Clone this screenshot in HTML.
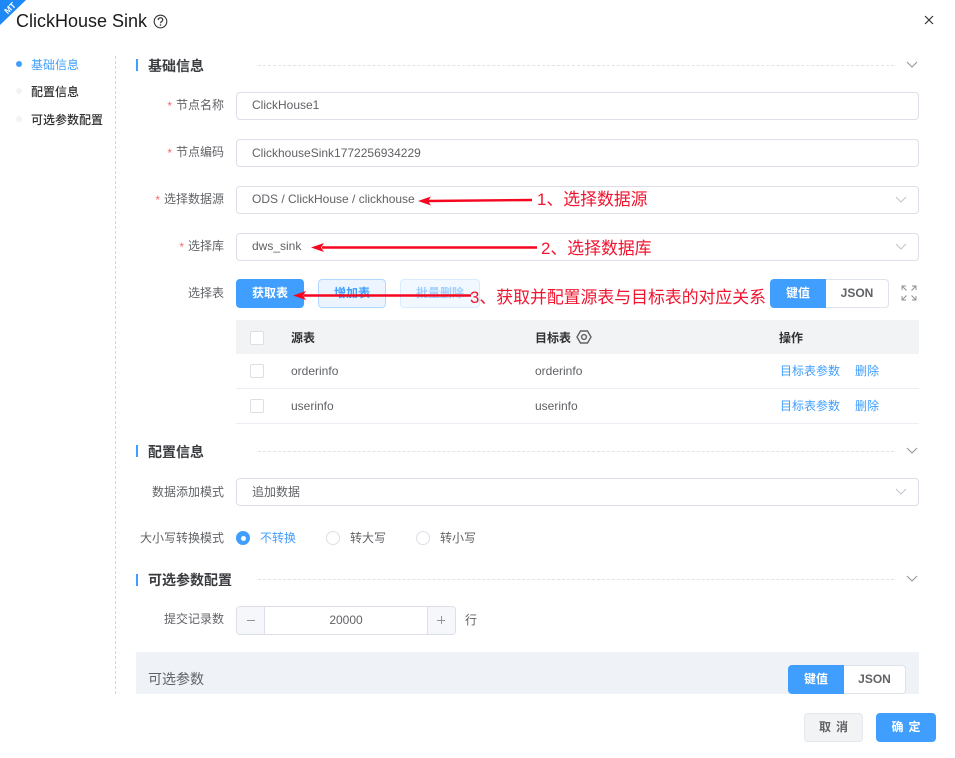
<!DOCTYPE html>
<html lang="zh"><head><meta charset="utf-8"><title>ClickHouse Sink</title>
<style>
html,body{margin:0;padding:0;background:#fff}
body{width:955px;height:758px;position:relative;overflow:hidden;font-family:"Liberation Sans","Noto Sans CJK SC",sans-serif;font-size:12px;color:#606266}
.a{position:absolute;white-space:nowrap}
.t{position:absolute;white-space:nowrap;line-height:20px;height:20px}
.lab{position:absolute;white-space:nowrap;line-height:20px;height:20px;right:731px;color:#606266;font-size:12px}
.lab i{font-style:normal;color:#f56c6c;margin-right:4px;position:relative;top:1px}
.inp{position:absolute;left:236px;width:681px;height:26px;border:1px solid #dcdfe8;border-radius:4px;background:#fff}
.val{position:absolute;left:252px;line-height:20px;height:20px;font-size:12px;color:#606266;white-space:nowrap}
.sec{position:absolute;left:148px;line-height:20px;height:20px;font-size:14px;font-weight:bold;color:#3a3c40;white-space:nowrap}
.bar{position:absolute;left:136px;width:2px;height:12px;background:#409eff}
.dash{position:absolute;left:258px;width:636px;border-top:1px dashed #e0e3ea}
.btn{position:absolute;box-sizing:border-box;text-align:center;border-radius:4px;font-size:12px;font-weight:bold}
.ck{position:absolute;left:250px;width:12px;height:12px;border:1px solid #dcdfe6;border-radius:2px;background:#fff}
.link{position:absolute;line-height:20px;height:20px;color:#409eff;font-size:12px;white-space:nowrap}
.rad{position:absolute;box-sizing:border-box;width:14px;height:14px;border-radius:50%;border:1px solid #dcdfe6;background:#fff}
.red{position:absolute;white-space:nowrap;color:#f0142f;font-size:16.880px;line-height:24px;height:24px}
.seg{position:absolute;box-sizing:border-box;height:29px;line-height:27px;text-align:center;font-weight:bold;font-size:12px}
</style></head><body>

<!-- corner ribbon -->
<svg class="a" style="left:0;top:0" width="30" height="26" viewBox="0 0 30 26"><polygon points="0,0 26,0 0,25" fill="#1e88f5"/><text x="10" y="11" text-anchor="middle" font-size="8.500" font-weight="bold" fill="#fff" font-family="Liberation Sans" transform="rotate(-45 10 8)">MT</text></svg>

<div class="t" style="left:16px;top:11px;font-size:18px;color:#1a1a1a">ClickHouse Sink</div>
<svg class="a" style="left:153px;top:14px" width="15" height="15" viewBox="0 0 15 15"><circle cx="7.500" cy="7.500" r="6.300" fill="none" stroke="#333" stroke-width="1.100"/><path d="M5.200 6c0-1.400 1-2.200 2.300-2.200s2.300.8 2.300 2c0 1.700-2.300 1.700-2.300 3.400" fill="none" stroke="#333" stroke-width="1.200"/><circle cx="7.500" cy="11" r=".8" fill="#333"/></svg>
<svg class="a" style="left:923px;top:14px" width="12" height="12" viewBox="0 0 12 12"><path d="M2 2l8 8M10 2l-8 8" stroke="#333" stroke-width="1.200" fill="none"/></svg>

<!-- side nav -->
<div class="a" style="left:16px;top:61px;width:6px;height:6px;border-radius:50%;background:#409eff"></div>
<div class="a" style="left:16px;top:88px;width:6px;height:6px;border-radius:50%;background:#f0f2f5"></div>
<div class="a" style="left:16px;top:116px;width:6px;height:6px;border-radius:50%;background:#f0f2f5"></div>
<div class="t" style="left:31px;top:55px;color:#409eff">基础信息</div>
<div class="t" style="left:31px;top:82px;color:#303133;font-weight:500">配置信息</div>
<div class="t" style="left:31px;top:110px;color:#303133;font-weight:500">可选参数配置</div>
<div class="a" style="left:115px;top:56px;height:638px;border-left:1px dashed #d3d6dc"></div>

<!-- section 1 -->
<div class="bar" style="top:59px"></div>
<div class="sec" style="top:56px">基础信息</div>
<div class="dash" style="top:65px"></div>
<svg class="a" style="left:906px;top:61px" width="12" height="8" viewBox="0 0 12 8"><path d="M1 1l5 5 5-5" fill="none" stroke="#909399" stroke-width="1"/></svg>

<div class="lab" style="top:95px"><i>*</i>节点名称</div>
<div class="inp" style="top:92px"></div>
<div class="val" style="top:95px">ClickHouse1</div>

<div class="lab" style="top:142px"><i>*</i>节点编码</div>
<div class="inp" style="top:139px"></div>
<div class="val" style="top:143px">ClickhouseSink1772256934229</div>

<div class="lab" style="top:189px"><i>*</i>选择数据源</div>
<div class="inp" style="top:186px"></div>
<div class="val" style="top:189px">ODS / ClickHouse / clickhouse</div>
<svg class="a" style="left:895px;top:196px" width="12" height="8" viewBox="0 0 12 8"><path d="M1 1l5 5 5-5" fill="none" stroke="#c0c4cc" stroke-width="1"/></svg>

<div class="lab" style="top:236px"><i>*</i>选择库</div>
<div class="inp" style="top:233px"></div>
<div class="val" style="top:236px">dws_sink</div>
<svg class="a" style="left:895px;top:243px" width="12" height="8" viewBox="0 0 12 8"><path d="M1 1l5 5 5-5" fill="none" stroke="#c0c4cc" stroke-width="1"/></svg>

<!-- table toolbar -->
<div class="lab" style="top:283px">选择表</div>
<div class="btn" style="left:236px;top:279px;width:68px;height:29px;line-height:29px;background:#409eff;color:#fff">获取表</div>
<div class="btn" style="left:318px;top:279px;width:68px;height:29px;line-height:27px;background:#ecf5ff;border:1px solid #b3d8ff;color:#409eff">增加表</div>
<div class="btn" style="left:400px;top:279px;width:80px;height:29px;line-height:27px;background:#f2f8ff;border:1px solid #d9ecff;color:#a0cfff">批量删除</div>
<div class="seg" style="left:770px;top:279px;width:56px;background:#409eff;color:#fff;border-radius:4px 0 0 4px;line-height:29px">键值</div>
<div class="seg" style="left:826px;top:279px;width:63px;border:1px solid #dfe3ec;border-left:0;border-radius:0 4px 4px 0;color:#606266">JSON</div>
<svg class="a" style="left:901px;top:285px" width="16" height="16" viewBox="0 0 16 16"><path d="M1 5V1h4M1.500 1.500l4 4M11 1h4v4M14.500 1.500l-4 4M1 11v4h4M1.500 14.500l4-4M15 11v4h-4M14.500 14.500l-4-4" fill="none" stroke="#8c8c8c" stroke-width=".9"/></svg>

<!-- table -->
<div class="a" style="left:236px;top:320px;width:683px;height:34px;background:#f2f3f5"></div>
<div class="a" style="left:236px;top:388px;width:683px;height:1px;background:#ebeef5"></div>
<div class="a" style="left:236px;top:423px;width:683px;height:1px;background:#ebeef5"></div>
<div class="ck" style="top:331px"></div>
<div class="ck" style="top:364px"></div>
<div class="ck" style="top:399px"></div>
<div class="t" style="left:291px;top:328px;color:#303133;font-weight:bold">源表</div>
<div class="t" style="left:535px;top:328px;color:#303133;font-weight:bold">目标表</div>
<svg class="a" style="left:576px;top:329px" width="16" height="16" viewBox="0 0 16 16"><polygon points="4.500,2 11.500,2 15,8 11.500,14 4.500,14 1,8" fill="none" stroke="#606266" stroke-width="1.400"/><circle cx="8" cy="8" r="2.400" fill="none" stroke="#606266" stroke-width="1.400"/></svg>
<div class="t" style="left:779px;top:328px;color:#303133;font-weight:bold">操作</div>
<div class="t" style="left:291px;top:361px">orderinfo</div>
<div class="t" style="left:535px;top:361px">orderinfo</div>
<div class="link" style="left:780px;top:361px">目标表参数</div>
<div class="link" style="left:855px;top:361px">删除</div>
<div class="t" style="left:291px;top:396px">userinfo</div>
<div class="t" style="left:535px;top:396px">userinfo</div>
<div class="link" style="left:780px;top:396px">目标表参数</div>
<div class="link" style="left:855px;top:396px">删除</div>

<!-- section 2 -->
<div class="bar" style="top:445px"></div>
<div class="sec" style="top:442px">配置信息</div>
<div class="dash" style="top:451px"></div>
<svg class="a" style="left:906px;top:447px" width="12" height="8" viewBox="0 0 12 8"><path d="M1 1l5 5 5-5" fill="none" stroke="#909399" stroke-width="1"/></svg>

<div class="lab" style="top:482px">数据添加模式</div>
<div class="inp" style="top:478px"></div>
<div class="val" style="top:482px">追加数据</div>
<svg class="a" style="left:895px;top:488px" width="12" height="8" viewBox="0 0 12 8"><path d="M1 1l5 5 5-5" fill="none" stroke="#c0c4cc" stroke-width="1"/></svg>

<div class="lab" style="top:528px">大小写转换模式</div>
<div class="rad" style="left:236px;top:531px;background:#409eff;border-color:#409eff"></div>
<div class="a" style="left:240.500px;top:535.500px;width:5px;height:5px;border-radius:50%;background:#fff"></div>
<div class="t" style="left:260px;top:528px;color:#409eff">不转换</div>
<div class="rad" style="left:326px;top:531px"></div>
<div class="t" style="left:350px;top:528px">转大写</div>
<div class="rad" style="left:416px;top:531px"></div>
<div class="t" style="left:440px;top:528px">转小写</div>

<!-- section 3 -->
<div class="bar" style="top:574px"></div>
<div class="sec" style="top:570px">可选参数配置</div>
<div class="dash" style="top:579px"></div>
<svg class="a" style="left:906px;top:575px" width="12" height="8" viewBox="0 0 12 8"><path d="M1 1l5 5 5-5" fill="none" stroke="#909399" stroke-width="1"/></svg>

<div class="lab" style="top:609px">提交记录数</div>
<div class="a" style="left:236px;top:606px;width:218px;height:27px;border:1px solid #dcdfe8;border-radius:4px;background:#fff"></div>
<div class="a" style="left:237px;top:607px;width:27px;height:27px;background:#f5f7fa;border-right:1px solid #dcdfe8;border-radius:3px 0 0 3px"></div>
<div class="a" style="left:427px;top:607px;width:27px;height:27px;background:#f5f7fa;border-left:1px solid #dcdfe8;border-radius:0 3px 3px 0"></div>
<div class="a" style="left:247px;top:620px;width:8px;height:1px;background:#909399"></div>
<div class="a" style="left:437px;top:620px;width:8px;height:1px;background:#909399"></div>
<div class="a" style="left:441px;top:616px;width:1px;height:8px;background:#909399"></div>
<div class="t" style="left:265px;top:610px;width:162px;text-align:center">20000</div>
<div class="t" style="left:465px;top:610px">行</div>

<!-- optional params panel -->
<div class="a" style="left:136px;top:652px;width:783px;height:42px;background:#eff2f7"></div>
<div class="t" style="left:148px;top:669px;font-size:14px;color:#606266">可选参数</div>
<div class="seg" style="left:788px;top:665px;width:56px;background:#409eff;color:#fff;border-radius:4px 0 0 4px;line-height:29px">键值</div>
<div class="seg" style="left:844px;top:665px;width:62px;background:#fff;border:1px solid #dfe3ec;border-left:0;border-radius:0 4px 4px 0;color:#606266">JSON</div>

<!-- footer -->
<div class="btn" style="left:804px;top:713px;width:59px;height:29px;line-height:27px;background:#f2f3f5;border:1px solid #e4e7ed;color:#606266;letter-spacing:5px;padding-left:5px">取消</div>
<div class="btn" style="left:876px;top:713px;width:60px;height:29px;line-height:29px;background:#409eff;color:#fff;letter-spacing:5px;padding-left:5px">确定</div>

<!-- annotations -->
<svg class="a" style="left:0;top:0" width="955" height="758" viewBox="0 0 955 758">
<path d="M532 200L428 201" stroke="#f5071f" stroke-width="2.400" fill="none"/><polygon points="418,201 431,196.500 428,201 431,205.500" fill="#f5071f"/>
<path d="M537 247.500L322 247.500" stroke="#f5071f" stroke-width="2.400" fill="none"/><polygon points="311,247.500 324,243 321,247.500 324,252" fill="#f5071f"/>
<path d="M471 295.500L304 295.500" stroke="#f5071f" stroke-width="2.400" fill="none"/><polygon points="293,295.500 306,291 303,295.500 306,300" fill="#f5071f"/>
</svg>
<div class="red" style="left:537px;top:188px">1、选择数据源</div>
<div class="red" style="left:541px;top:237px">2、选择数据库</div>
<div class="red" style="left:470px;top:286px">3、获取并配置源表与目标表的对应关系</div>
</body></html>
